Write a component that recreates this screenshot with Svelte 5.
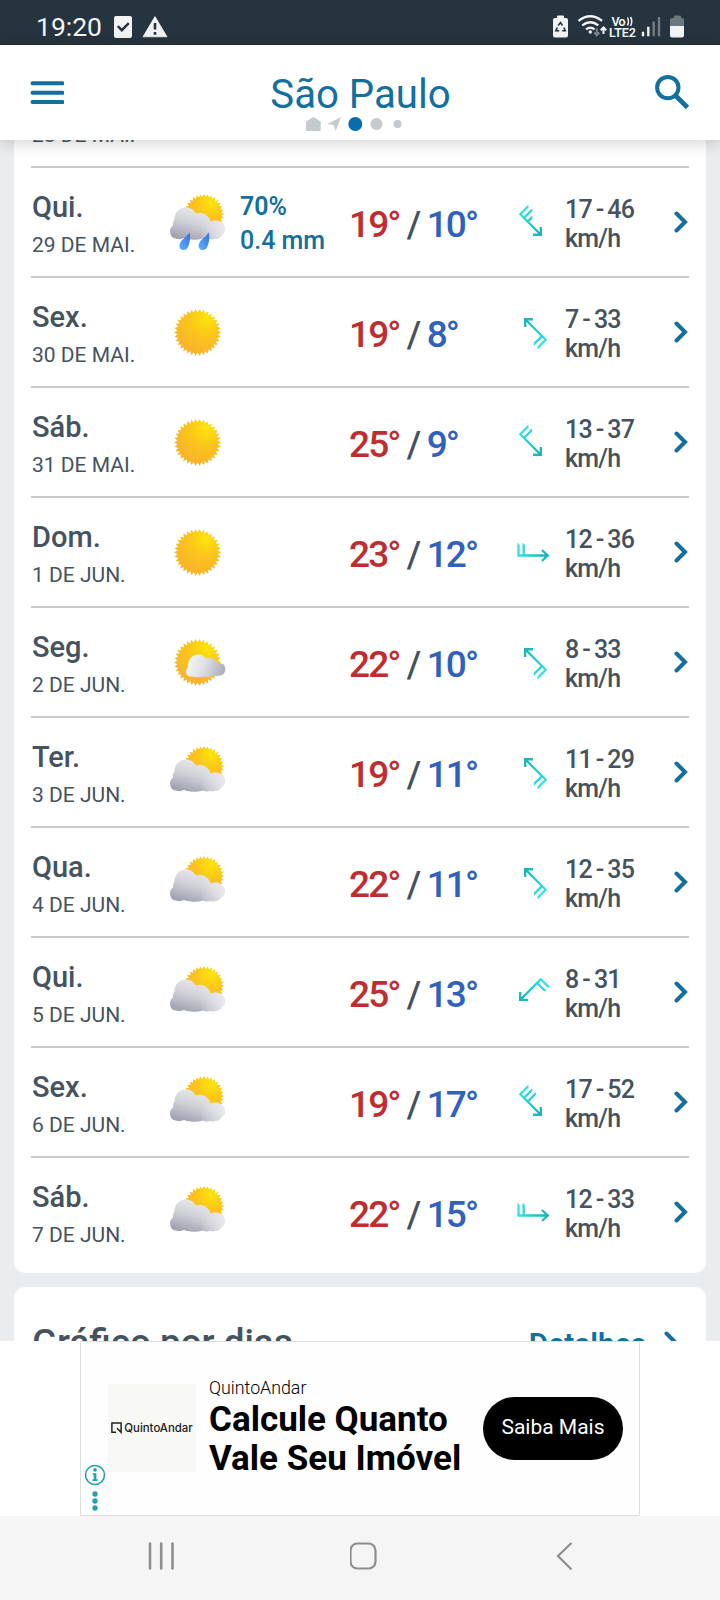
<script>

let city = 'São Paulo';
let scrolledDate = '28 DE MAI.';

let days = [
  { name: 'Qui.', date: '29 DE MAI.', icon: 'rain', prob: '70%', rain: '0.4 mm', max: 19, min: 10, dir: 45, barbs: [11, 11, 6], wind: '17 - 46' },
  { name: 'Sex.', date: '30 DE MAI.', icon: 'sun', max: 19, min: 8, dir: 225, barbs: [11, 11], wind: '7 - 33' },
  { name: 'Sáb.', date: '31 DE MAI.', icon: 'sun', max: 25, min: 9, dir: 45, barbs: [11, 11], wind: '13 - 37' },
  { name: 'Dom.', date: '1 DE JUN.', icon: 'sun', max: 23, min: 12, dir: 0, barbs: [11, 11], wind: '12 - 36' },
  { name: 'Seg.', date: '2 DE JUN.', icon: 'partly', max: 22, min: 10, dir: 225, barbs: [11, 11], wind: '8 - 33' },
  { name: 'Ter.', date: '3 DE JUN.', icon: 'cloudy', max: 19, min: 11, dir: 225, barbs: [11, 11], wind: '11 - 29' },
  { name: 'Qua.', date: '4 DE JUN.', icon: 'cloudy', max: 22, min: 11, dir: 225, barbs: [11, 11], wind: '12 - 35' },
  { name: 'Qui.', date: '5 DE JUN.', icon: 'cloudy', max: 25, min: 13, dir: 135, barbs: [11, 11], wind: '8 - 31' },
  { name: 'Sex.', date: '6 DE JUN.', icon: 'cloudy', max: 19, min: 17, dir: 45, barbs: [11, 11, 11], wind: '17 - 52' },
  { name: 'Sáb.', date: '7 DE JUN.', icon: 'cloudy', max: 22, min: 15, dir: 0, barbs: [11, 11], wind: '12 - 33' },
];

// spiky outline of the sun
let sunPath = (cx, cy, inner, outer, teeth) => {
  let points = [];
  for (let i = 0; i < teeth * 2; i++) {
    let r = i % 2 ? inner : outer;
    let a = (i * Math.PI) / teeth;
    points.push(`${(cx + r * Math.cos(a)).toFixed(2)},${(cy + r * Math.sin(a)).toFixed(2)}`);
  }
  return points.join(' ');
};

let bigSun = sunPath(29.6, 29.4, 20.2, 23.6, 34);
let smallSun = sunPath(36, 23, 17.2, 20, 32);

</script>

<svg class="defs" width="0" height="0">
  <defs>
    <radialGradient id="sun-fill" cx="0.68" cy="0.2" r="0.75">
      <stop offset="0" stop-color="#fde509" />
      <stop offset="0.5" stop-color="#fbc51c" />
      <stop offset="1" stop-color="#f9b42a" />
    </radialGradient>
    <linearGradient id="cloud-fill" gradientUnits="userSpaceOnUse" x1="30" y1="17" x2="21" y2="49">
      <stop offset="0" stop-color="#e9e9ec" />
      <stop offset="0.5" stop-color="#cfd0d6" />
      <stop offset="1" stop-color="#a2a4b3" />
    </linearGradient>
    <linearGradient id="cloud-light" gradientUnits="userSpaceOnUse" x1="32" y1="36" x2="57" y2="40">
      <stop offset="0" stop-color="#f0f0f4" stop-opacity="0" />
      <stop offset="1" stop-color="#f0f0f4" stop-opacity="0.75" />
    </linearGradient>
    <linearGradient id="puff-fill" gradientUnits="userSpaceOnUse" x1="20" y1="30" x2="56" y2="42">
      <stop offset="0" stop-color="#f5f5f6" />
      <stop offset="0.45" stop-color="#dddee3" />
      <stop offset="1" stop-color="#a9abb9" />
    </linearGradient>
    <linearGradient id="drop-fill" x1="1" y1="0" x2="0" y2="1">
      <stop offset="0" stop-color="#2f72dc" />
      <stop offset="1" stop-color="#62b2ff" />
    </linearGradient>
    <linearGradient id="wind-stroke" gradientUnits="userSpaceOnUse" x1="2" y1="0" x2="33" y2="0">
      <stop offset="0" stop-color="#35e0e2" />
      <stop offset="0.5" stop-color="#22c8cc" />
      <stop offset="1" stop-color="#1bb0b6" />
    </linearGradient>
  </defs>
</svg>

<div class="screen">
  <div class="status-bar">
    <span class="clock">19:20</span>
    <svg class="status-left" width="54" height="24" viewBox="0 0 54 24">
      <rect x="0" y="1" width="18" height="22" rx="2" fill="#f2f4f5" />
      <path d="M3.8 11.2l4 4 7-7" fill="none" stroke="#26343f" stroke-width="2.4" />
      <path d="M41 1.6L53 21.8H29z" fill="#f2f4f5" stroke="#f2f4f5" stroke-width="0.8" stroke-linejoin="round" />
      <path d="M41 8v6.4M41 17v2.8" stroke="#26343f" stroke-width="2.6" />
    </svg>
    <svg class="status-right" width="134" height="26" viewBox="0 0 134 26">
      <path d="M4 3V1.5Q4 .5 5 .5h5q1 0 1 1V3h2q2 0 2 2v15.5q0 2-2 2H2q-2 0-2-2V5q0-2 2-2z" fill="#f2f4f5" />
      <path d="M5.2 10.5l2.3-3 2 3M10.8 12.5l1.5 3.3H9.2M6.2 15.8H2.8l1.5-3.3" fill="none" stroke="#26343f" stroke-width="1.6" />
      <g fill="none" stroke="#f2f4f5" stroke-width="2.3">
        <path d="M25.5 5.8q11.8-9.2 23.6 0" />
        <path d="M29.3 10.3q8-6.2 16 0" />
        <path d="M33 14.3q4.3-3.2 8.600 0" />
      </g>
      <circle cx="37.3" cy="17" r="1.7" fill="#f2f4f5" />
      <path d="M43.8 13.5v6.5M41.3 17.5l2.5 2.8 2.5-2.8" fill="none" stroke="#7d868d" stroke-width="1.9" />
      <path d="M50.5 19v-6.5M47.8 15.3l2.7-2.9 2.7 2.9" fill="none" stroke="#f2f4f5" stroke-width="2" />
      <text x="58.5" y="10.5" class="net" textLength="14">Vo</text>
      <path d="M74.5 2.5q2 3.7 0 8M77.5 2q2.6 4.2 0 9" fill="none" stroke="#f2f4f5" stroke-width="1.5" />
      <text x="56" y="22" class="net" textLength="27">LTE2</text>
      <g stroke-width="2.4">
        <path d="M90 21.2v-4.5M95.3 21.2V11.7" stroke="#f2f4f5" />
        <path d="M100.7 21.2V6.5M106 21.2V2" stroke="#737d84" />
      </g>
      <path d="M121 3V1.5Q121 .5 122 .5h5q1 0 1 1V3h1q2 0 2 2v6h-14V5q0-2 2-2z" fill="#6d777e" />
      <path d="M117 11h14v9.5q0 2-2 2h-10q-2 0-2-2z" fill="#f2f4f5" />
    </svg>
  </div><!--status-bar-->

  <header>
    <button class="menu" aria-label="Menu">
      <svg width="34" height="24" viewBox="0 0 34 24">
        <path d="M2.5 2.3h30M2.5 11.7h30M2.5 21h30" stroke="#136f9d" stroke-width="4" stroke-linecap="round" />
      </svg>
    </button>
    <div class="place">
      <h1>{city}</h1>
      <svg width="96" height="16" viewBox="0 0 96 16">
        <path d="M0 5.5L7.3 1 14.7 5.5V15H0z" fill="#c3cbcf" />
        <path d="M35 1L21.5 8l6.2 1 2 6z" fill="#c3cbcf" />
        <circle cx="49.3" cy="8" r="7" fill="#0a6ea6" />
        <circle cx="70.5" cy="8" r="6" fill="#c3cbcf" />
        <circle cx="91.5" cy="8" r="4" fill="#c3cbcf" />
      </svg>
    </div>
    <button class="search" aria-label="Buscar">
      <svg width="36" height="36" viewBox="0 0 36 36">
        <circle cx="13.8" cy="13.6" r="10.7" fill="none" stroke="#136f9d" stroke-width="4" />
        <path d="M21.5 21.5L33.5 33.5" stroke="#136f9d" stroke-width="4.6" />
      </svg>
    </button>
  </header>

  <main>
    <section class="card days">
      <div class="scrolled">{scrolledDate}</div>
      {#each days as day}
        <div class="day">
          <div class="when">
            <strong>{day.name}</strong>
            <span>{day.date}</span>
          </div>
          <svg class="sky" width="60" height="60" viewBox="0 0 60 60">
            {#if day.icon == 'sun' || day.icon == 'partly'}
              <polygon points={bigSun} fill="url(#sun-fill)" />
            {/if}
            {#if day.icon == 'partly'}
              <path d="M24 43.5q-6 .5-6-5 0-3 2-4.200-.5-5.500 2.700-9.300 3.300-3.700 8.300-3.500 4.300.3 7 4.300 3-1.700 6.300-.5 3.700 1.200 4.700 5 8-1.500 8.300 6.200-.3 6-6.800 6.300-3.500.8-6 .3-4.500 1.500-8.500.3-6 1.600-12 .1z" fill="url(#puff-fill)" />
            {/if}
            {#if day.icon == 'cloudy' || day.icon == 'rain'}
              <g transform={day.icon == 'rain' ? 'translate(0 -2)' : ''}>
                <polygon points={smallSun} fill="url(#sun-fill)" />
                <path d="M8.5 47.7q-6.500-.7-6.500-7.200 0-4 3-6-.7-3.500 1.500-6 .2-6 3.500-9 3.500-3.200 8-3.200 6.500.3 9.800 6.300 3.700-1.500 7.200-.4 5.500 1.800 7.600 8.200 6-2 10 .6 4.500 3 4.400 7.500-.2 4-3.500 5.500-2 4-6.500 3.700-2.500 1-5 0-3.500 1.500-7-.3-6.500 2-12 1-4.500 0-7-1.300-4 1.800-7.500.6z" fill="url(#cloud-fill)" />
                <path d="M27.8 22.6q3.700-1.500 7.200-.4 5.500 1.800 7.600 8.200 6-2 10 .6 4.500 3 4.400 7.500-.2 4-3.500 5.500-2 4-6.500 3.700-2.500 1-5 0-3.500 1.500-7-.3z" fill="url(#cloud-light)" />
              </g>
            {/if}
            {#if day.icon == 'rain'}
              <path d="M21.6 39.5q1.2 7-.8 12.5-1.5 5-5.2 5-4-.2-4.2-4 0-4 4.400-7.500 3.500-3 5.800-6z" fill="url(#drop-fill)" />
              <path d="M40.8 39.5q1.2 7-.8 12.5-1.5 5-5.2 5-4-.2-4.2-4 0-4 4.400-7.500 3.500-3 5.800-6z" fill="url(#drop-fill)" />
            {/if}
          </svg>
          <div class="precip">
            {#if day.rain}
              <b>{day.prob}</b>
              <span>{day.rain}</span>
            {/if}
          </div>
          <div class="temps">
            <span class="max">{day.max}°</span>
            <span class="slash">/</span>
            <span class="min">{day.min}°</span>
          </div>
          <svg class="barb" width="34" height="34" viewBox="0 0 34 34">
            <g transform="rotate({day.dir} 17 17)" fill="none" stroke="url(#wind-stroke)" stroke-width="2.3">
              <path d="M1.5 20.5h30v.02M26 15l5.7 5.5L26 26" />
              {#each day.barbs as len, i}
                <path d="M{2.5 + i * 5.2} 20.5v-{len}h.02" />
              {/each}
            </g>
          </svg>
          <div class="wind">
            <span>{day.wind}</span>
            <span>km/h</span>
          </div>
          <svg class="chevron" width="15" height="22" viewBox="0 0 15 22">
            <path d="M2.5 2.5l8.5 8.5-8.5 8.5" fill="none" stroke="#136f9d" stroke-width="4" stroke-linecap="round" />
          </svg>
        </div><!--day-->
      {/each}
    </section>

    <section class="card chart">
      <h2>Gráfico por dias</h2>
      <span class="details">Detalhes</span>
      <svg class="chevron" width="15" height="22" viewBox="0 0 15 22">
        <path d="M2.5 2.5l8.5 8.5-8.5 8.5" fill="none" stroke="#136f9d" stroke-width="4" stroke-linecap="round" />
      </svg>
    </section>
  </main>

  <div class="banner">
    <div class="ad">
      <div class="ad-marks">
        <svg width="22" height="48" viewBox="0 0 22 48">
          <circle cx="11" cy="11" r="9.5" fill="none" stroke="#25a0b0" stroke-width="1.6" />
          <g fill="#25a0b0">
            <circle cx="11" cy="5.9" r="1.8" />
            <path d="M8.8 9.2h3.6v6h1.2V17H8.5v-1.8h1.2v-4.2h-.9z" />
            <circle cx="11" cy="30" r="2.7" />
            <circle cx="11" cy="37" r="2.7" />
            <circle cx="11" cy="44" r="2.7" />
          </g>
        </svg>
      </div>
      <div class="logo">
        <svg width="11" height="12" viewBox="0 0 11 12">
          <path d="M5 10.3H.9V1h9.2v9.3L6 6.2" fill="none" stroke="#222" stroke-width="1.5" />
        </svg>
        <span>QuintoAndar</span>
      </div>
      <div class="ad-copy">
        <small>QuintoAndar</small>
        <p>Calcule Quanto<br>Vale Seu Imóvel</p>
      </div>
      <button class="cta">Saiba Mais</button>
    </div>
  </div><!--banner-->

  <nav>
    <svg width="28" height="28" viewBox="0 0 28 28">
      <path d="M2 1.5v25M13.2 1.5v25M24.5 1.5v25" stroke="#8e8e8e" stroke-width="2.6" stroke-linecap="round" />
    </svg>
    <svg width="28" height="28" viewBox="0 0 28 28">
      <rect x="0.5" y="1.5" width="25" height="25" rx="7" fill="none" stroke="#8e8e8e" stroke-width="2.2" />
    </svg>
    <svg width="28" height="28" viewBox="0 0 28 28">
      <path d="M20.5 1L7 14l13.500 13.500" fill="none" stroke="#8e8e8e" stroke-width="2.2" />
    </svg>
  </nav>
</div><!--screen-->

<style>

:global(body) {
  margin: 0;
  background-color: #fff;
}

.screen {
  width: 720px;
  height: 1600px;
  display: flex;
  flex-direction: column;
  overflow: hidden;
  font-family: Roboto, "Liberation Sans", sans-serif;
  color: #45535f;
}

.screen * {
  box-sizing: border-box;
}

.defs {
  position: absolute;
}

svg {
  display: block;
  flex: none;
}

button {
  border: 0;
  padding: 0;
  background: none;
  font-family: inherit;
}

.status-bar {
  height: 45px;
  flex: none;
  display: flex;
  align-items: flex-start;
  padding: 15px 36px 0 36px;
  background-color: #26343f;
}

.clock {
  width: 78px;
  font-size: 26.5px;
  line-height: 24px;
  color: #f2f4f5;
}

.status-right {
  margin-left: auto;
  margin-right: -3px;
}

.net {
  font-size: 12.5px;
  font-weight: 600;
  fill: #f2f4f5;
}

header {
  height: 95px;
  flex: none;
  display: flex;
  justify-content: space-between;
  position: relative;
  z-index: 1;
  padding: 0 30px;
  background-color: #fff;
  box-shadow: 0 2px 16px rgba(0,0,0,0.2);
}

.menu {
  height: 24px;
  margin-top: 36px;
}

.search {
  height: 36px;
  margin-top: 29px;
}

.place {
  display: flex;
  flex-direction: column;
  align-items: center;
  margin: 28px 0 0 3px;
}

h1 {
  height: 43px;
  margin: 0;
  font-size: 40.2px;
  font-weight: 400;
  line-height: 44px;
  color: #136f9d;
}

.place svg {
  margin-left: -12px;
}

main {
  height: 1201px;
  flex: none;
  overflow: hidden;
  padding: 0 14px;
  background-color: #ebecee;
}

.card {
  background-color: #fff;
  border-radius: 11px;
}

.days {
  margin-top: -23px;
  padding: 0 17px 7px;
}

/* last line of the row that has scrolled under the header */
.scrolled {
  height: 49px;
  padding-left: 1px;
  font-size: 21px;
  line-height: 36px;
}

.day {
  height: 110px;
  display: grid;
  grid-template-columns: 137px 72px 109px 167px 49px 1fr 15px;
  align-items: start;
  border-top: 2px solid #cbcbcd;
}

.when {
  display: grid;
  padding: 20px 0 0 1px;
}

.when strong {
  font-size: 29px;
  font-weight: 500;
  line-height: 38px;
}

.when span {
  margin-top: 1px;
  font-size: 21px;
  line-height: 36px;
}

.sky {
  margin-top: 25px;
}

.precip {
  display: grid;
  padding-top: 22px;
  font-size: 25px;
  font-weight: 500;
  line-height: 34px;
  color: #136f9d;
}

.precip b {
  font-weight: 600;
}

.temps {
  padding-top: 35px;
  font-size: 37px;
  font-weight: 500;
  line-height: 44px;
  letter-spacing: -1.9px;
  white-space: nowrap;
}

.max {
  color: #be2e30;
}

.min {
  color: #3061bd;
}

.barb {
  margin-top: 37px;
}

.wind {
  display: grid;
  padding-top: 27px;
  font-size: 25px;
  font-weight: 500;
  line-height: 29px;
  letter-spacing: -0.8px;
  white-space: nowrap;
}

.wind span {
  word-spacing: -1.5px;
}

.day .chevron {
  margin-top: 43px;
}

.chart {
  height: 120px;
  display: flex;
  align-items: flex-start;
  margin-top: 14px;
  padding: 34px 27px 0 18px;
}

h2 {
  margin: 0;
  font-size: 36.8px;
  font-weight: 500;
  line-height: 44px;
}

.details {
  margin: 3px 18px 0 auto;
  font-size: 29.8px;
  font-weight: 600;
  line-height: 40px;
  color: #136f9d;
}

.chart .chevron {
  margin-top: 10px;
}

.banner {
  height: 175px;
  flex: none;
  padding: 0 80px;
  background-color: #fff;
}

.ad {
  height: 175px;
  display: flex;
  border: 1px solid #dedede;
  background-color: #fefefe;
}

.ad-marks {
  width: 27px;
  padding: 122px 0 0 3px;
}

.logo {
  width: 88px;
  height: 88px;
  display: flex;
  align-items: center;
  justify-content: center;
  gap: 2px;
  margin-top: 42px;
  background-color: #f8f8f5;
}

.logo span {
  font-family: Inter, sans-serif;
  font-size: 11.4px;
  font-weight: 500;
  color: #222;
}

.ad-copy {
  margin-left: 13px;
  padding-top: 35px;
  color: #000;
}

.ad-copy small {
  display: block;
  font-size: 17.8px;
  font-weight: 300;
  line-height: 22px;
}

.ad-copy p {
  margin: 1px 0 0;
  font-size: 35px;
  font-weight: 700;
  line-height: 39px;
  white-space: nowrap;
}

.cta {
  width: 140px;
  height: 63px;
  margin: 55px 16px 0 auto;
  padding-bottom: 3px;
  border-radius: 32px;
  background-color: #000;
  font-size: 21px;
  color: #fff;
}

nav {
  height: 84px;
  flex: none;
  display: flex;
  align-items: flex-start;
  justify-content: space-between;
  padding: 26px 141px 0 148px;
  background-color: #f5f5f5;
}

</style>
